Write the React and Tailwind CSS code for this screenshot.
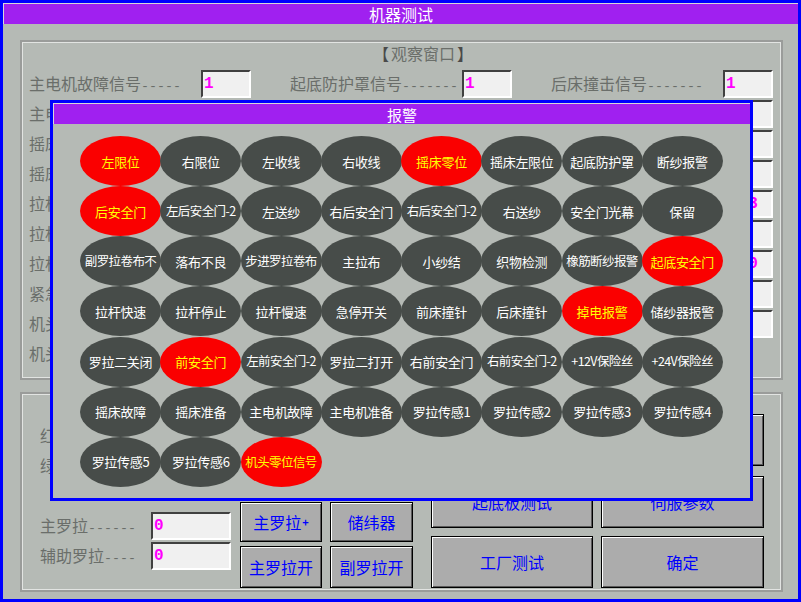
import React from "react";

const rows1 = [
  [["主电机故障信号", 5, "1"], ["起底防护罩信号", 7, "1"], ["后床撞击信号", 7, "1"]],
  [["主电机准备信号", 5, ""], ["断纱报警信号", 7, ""], ["储纱器报警信号", 7, ""]],
  [["摇床故障信号", 5, ""], ["左限位信号", 7, ""], ["右限位信号", 7, ""]],
  [["摇床准备信号", 5, ""], ["左收线信号", 7, ""], ["右收线信号", 7, ""]],
  [["拉杆快速信号", 5, ""], ["前安全门信号", 7, ""], ["罗拉计数", 7, "123", true]],
  [["拉杆停止信号", 5, ""], ["后安全门信号", 7, ""], ["右送纱信号", 7, ""]],
  [["拉杆慢速信号", 5, ""], ["掉电信号", 7, ""], ["步进计数", 7, "100", true]],
  [["紧急停车信号", 5, ""], ["织物检测信号", 7, ""], ["小纱结信号", 7, ""]],
  [["机头零位信号", 5, ""], ["安全门光幕信号", 7, ""], ["落布信号", 7, ""]],
];

const alarms = [
  ["左限位", 1], ["右限位"], ["左收线"], ["右收线"], ["摇床零位", 1], ["摇床左限位"], ["起底防护罩"], ["断纱报警"],
  ["后安全门", 1], ["左后安全门-2"], ["左送纱"], ["右后安全门"], ["右后安全门-2"], ["右送纱"], ["安全门光幕"], ["保留"],
  ["副罗拉卷布不"], ["落布不良"], ["步进罗拉卷布"], ["主拉布"], ["小纱结"], ["织物检测"], ["橡筋断纱报警"], ["起底安全门", 1],
  ["拉杆快速"], ["拉杆停止"], ["拉杆慢速"], ["急停开关"], ["前床撞针"], ["后床撞针"], ["掉电报警", 1], ["储纱器报警"],
  ["罗拉二关闭"], ["前安全门", 1], ["左前安全门-2"], ["罗拉二打开"], ["右前安全门"], ["右前安全门-2"], ["+12V保险丝"], ["+24V保险丝"],
  ["摇床故障"], ["摇床准备"], ["主电机故障"], ["主电机准备"], ["罗拉传感1"], ["罗拉传感2"], ["罗拉传感3"], ["罗拉传感4"],
  ["罗拉传感5"], ["罗拉传感6"], ["机头零位信号", 1],
];

function Label({ name, dashes }) {
  return (
    <span className="whitespace-nowrap text-[16px] text-[#6a6e6a] leading-none">
      {name}
      <span className="font-['Liberation_Mono'] text-[13.33px]">{"-".repeat(dashes)}</span>
    </span>
  );
}

function Field({ value, w = "w-[50px]", pad }) {
  return (
    <div
      className={`${w} ${pad ? "pl-[4px]" : "pl-[1px]"} h-[28px] shrink-0 bg-[#f0f0f0] border-2 border-t-[#404040] border-l-[#404040] border-b-white border-r-white flex items-center font-['Liberation_Mono'] font-bold text-[16px] text-[#ff00ff] leading-none overflow-hidden`}
    >
      {value}
    </div>
  );
}

function Btn({ children, className }) {
  return (
    <div
      className={`${className} flex items-center justify-center bg-[#acacac] text-[#0000ff] text-[16px] leading-none border border-black shadow-[inset_1px_1px_0_#ffffff,inset_-1px_-1px_0_#5a5a5a] whitespace-nowrap`}
    >
      {children}
    </div>
  );
}

export default function App() {
  return (
    <div className="relative w-[801px] h-[602px] bg-[#b5bab5] border-[3px] border-[#0000ff] overflow-hidden font-['Noto_Sans_CJK_SC',sans-serif]">
      {/* title bar */}
      <div className="h-[21px] bg-[#a020f0] border-t border-l border-[#d8d8d8] flex items-center justify-center text-white text-[16px] leading-none">
        机器测试
      </div>

      {/* group 1 */}
      <div className="ml-[17px] mt-[16px] w-[763px] h-[340px] border-2 border-[#9a9c9a]">
        <div className="h-full border border-[#e2e4e2] overflow-hidden">
          <div className="h-[20px] pl-[350px] flex items-center text-[16px] text-[#6a6e6a] leading-none whitespace-nowrap">
            <span className="text-[#4a4a4a] mr-[2px]">【</span>观察窗口<span className="text-[#4a4a4a] ml-[2px]">】</span>
          </div>
          <div className="mt-[7px] pl-[6px] flex flex-col gap-[2px]">
            {rows1.map((row, i) => (
              <div key={i} className="h-[28px] flex">
                {row.map(([name, d, v, pad], j) => (
                  <div key={j} className="w-[261px] shrink-0 flex items-center">
                    <div className="w-[172px] shrink-0 flex items-center">
                      <Label name={name} dashes={d} />
                    </div>
                    <Field value={v} pad={pad} />
                  </div>
                ))}
              </div>
            ))}
            <div className="h-[28px] flex items-center">
              <Label name="机头故障信号" dashes={5} />
            </div>
          </div>
        </div>
      </div>

      {/* group 2 */}
      <div className="ml-[17px] mt-[12px] w-[763px] h-[200px] border-2 border-[#9a9c9a]">
        <div className="h-full border border-[#e2e4e2] flex items-start">
          <div className="ml-[17px] w-[191px] shrink-0 pt-[27px] flex flex-col gap-[2px]">
            <div className="h-[28px] flex items-center justify-between">
              <Label name="红灯" dashes={6} />
              <Field value="0" w="w-[80px]" />
            </div>
            <div className="h-[28px] flex items-center justify-between">
              <Label name="绿灯" dashes={6} />
              <Field value="0" w="w-[80px]" />
            </div>
            <div className="mt-[30px] h-[28px] flex items-center justify-between">
              <Label name="主罗拉" dashes={6} />
              <Field value="0" w="w-[80px]" />
            </div>
            <div className="h-[28px] flex items-center justify-between">
              <Label name="辅助罗拉" dashes={4} />
              <Field value="0" w="w-[80px]" />
            </div>
          </div>

          <div className="ml-[9px] shrink-0 pt-[107px] grid grid-cols-[82px_83px] gap-x-[8px] gap-y-[4px]">
            <Btn className="h-[40px]">
              主罗拉<span className="text-[11px] font-bold ml-[1px]">+</span>
            </Btn>
            <Btn className="h-[40px]">储纬器</Btn>
            <Btn className="h-[42px]">主罗拉开</Btn>
            <Btn className="h-[42px]">副罗拉开</Btn>
          </div>

          <div className="ml-[18px] shrink-0 pt-[19px] grid grid-cols-[162px_163px] gap-x-[8px]">
            <Btn className="h-[52px]">送经测试</Btn>
            <Btn className="h-[52px]">电机测试</Btn>
            <Btn className="h-[52px] mt-[10px]">起底板测试</Btn>
            <Btn className="h-[52px] mt-[10px]">伺服参数</Btn>
            <Btn className="h-[52px] mt-[8px]">工厂测试</Btn>
            <Btn className="h-[52px] mt-[8px]">确定</Btn>
          </div>
        </div>
      </div>

      {/* alarm dialog overlay */}
      <div className="absolute left-[47px] top-[97px] w-[703px] h-[401px] border-[3px] border-[#0000ff] bg-[#b5bab5]">
        <div className="h-[21px] bg-[#a020f0] border-t border-l border-[#d8d8d8] flex items-center justify-center text-white text-[15px] leading-none">
          报警
        </div>
        <div className="ml-[27px] mt-[12px] grid grid-cols-[repeat(8,80.25px)] auto-rows-[50.17px]">
          {alarms.map(([t, red], i) => (
            <div
              key={i}
              className={`w-[81px] h-[50px] rounded-[50%] flex items-center justify-center leading-none whitespace-nowrap ${
                t.length >= 6 ? "text-[12.5px] tracking-[-0.6px]" : "text-[13px] tracking-[-0.3px]"
              } ${red ? "bg-[#fa0000] text-[#ffff00]" : "bg-[#474c49] text-white"}`}
            >
              {t}
            </div>
          ))}
        </div>
      </div>
    </div>
  );
}
